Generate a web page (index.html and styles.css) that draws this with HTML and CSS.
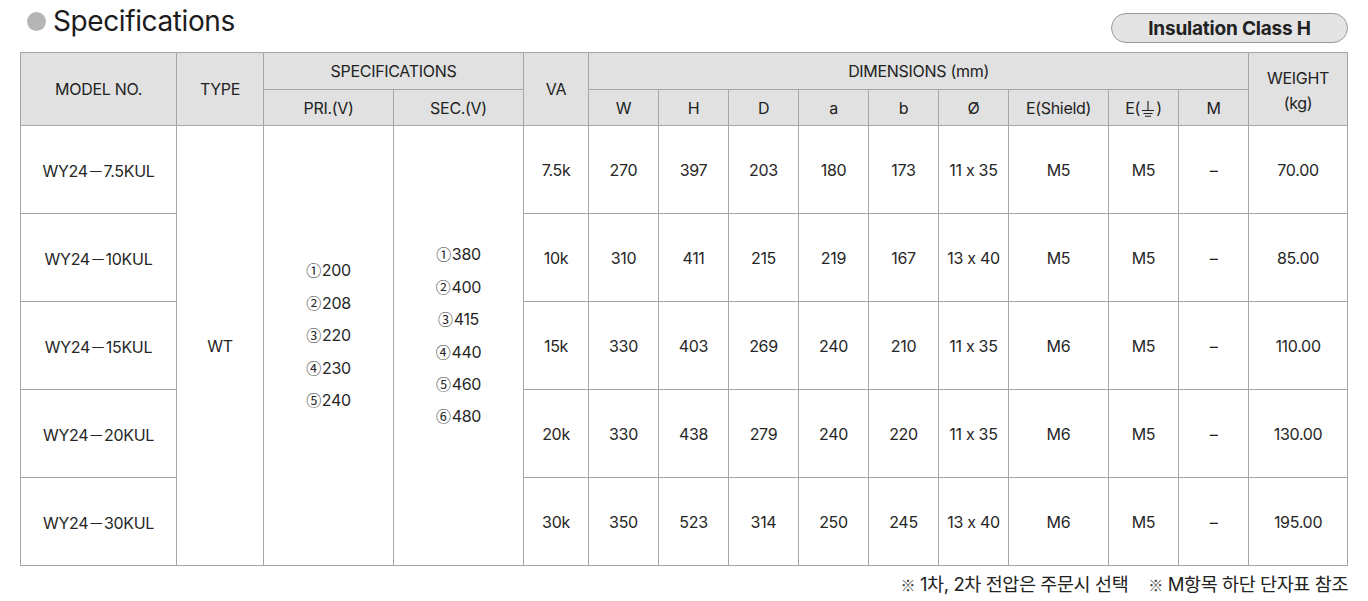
FILE: index.html
```html
<!DOCTYPE html>
<html lang="ko">
<head>
<meta charset="utf-8">
<link rel="stylesheet" href="styles.css">
</head>
<body>
<div class="page">
  <div class="head">
    <h1 class="title"><span class="dot"></span>Specifications</h1>
    <div class="badge">Insulation Class H</div>
  </div>
  <table class="spec">
    <colgroup>
      <col class="c156"><col class="c87"><col class="c130"><col class="c130"><col class="c65">
      <col class="c70"><col class="c70"><col class="c70"><col class="c70"><col class="c70"><col class="c70">
      <col class="c100"><col class="c70"><col class="c70"><col class="c99">
    </colgroup>
    <thead>
      <tr class="h1">
        <th rowspan="2">MODEL NO.</th>
        <th rowspan="2">TYPE</th>
        <th colspan="2">SPECIFICATIONS</th>
        <th rowspan="2">VA</th>
        <th colspan="9">DIMENSIONS (mm)</th>
        <th rowspan="2" class="wt">WEIGHT<br>(kg)</th>
      </tr>
      <tr class="h2">
        <th>PRI.(V)</th><th>SEC.(V)</th>
        <th>W</th><th>H</th><th>D</th><th>a</th><th>b</th><th>Ø</th><th>E(Shield)</th>
        <th>E(<svg class="gnd" width="14" height="17" viewBox="0 0 14 17"><path d="M7 1v9M1 10.5h12M2.5 13.5h9M4 16.2h6" stroke="#222" stroke-width="1.1" fill="none"/></svg>)</th>
        <th>M</th>
      </tr>
    </thead>
    <tbody>
      <tr>
        <td>WY24－7.5KUL</td>
        <td rowspan="5">WT</td>
        <td rowspan="5" class="list"><div class="lines"><span><i>①</i>200</span><span><i>②</i>208</span><span><i>③</i>220</span><span><i>④</i>230</span><span><i>⑤</i>240</span></div></td>
        <td rowspan="5" class="list"><div class="lines"><span><i>①</i>380</span><span><i>②</i>400</span><span><i>③</i>415</span><span><i>④</i>440</span><span><i>⑤</i>460</span><span><i>⑥</i>480</span></div></td>
        <td>7.5k</td><td>270</td><td>397</td><td>203</td><td>180</td><td>173</td><td>11 x 35</td><td>M5</td><td>M5</td><td>–</td><td>70.00</td>
      </tr>
      <tr>
        <td>WY24－10KUL</td>
        <td>10k</td><td>310</td><td>411</td><td>215</td><td>219</td><td>167</td><td>13 x 40</td><td>M5</td><td>M5</td><td>–</td><td>85.00</td>
      </tr>
      <tr>
        <td>WY24－15KUL</td>
        <td>15k</td><td>330</td><td>403</td><td>269</td><td>240</td><td>210</td><td>11 x 35</td><td>M6</td><td>M5</td><td>–</td><td>110.00</td>
      </tr>
      <tr>
        <td>WY24－20KUL</td>
        <td>20k</td><td>330</td><td>438</td><td>279</td><td>240</td><td>220</td><td>11 x 35</td><td>M6</td><td>M5</td><td>–</td><td>130.00</td>
      </tr>
      <tr>
        <td>WY24－30KUL</td>
        <td>30k</td><td>350</td><td>523</td><td>314</td><td>250</td><td>245</td><td>13 x 40</td><td>M6</td><td>M5</td><td>–</td><td>195.00</td>
      </tr>
    </tbody>
  </table>
  <p class="note"><span><b>※</b> 1차, 2차 전압은 주문시 선택</span><span><b>※</b> M항목 하단 단자표 참조</span></p>
</div>
</body>
</html>
```
FILE: styles.css
```css
* { box-sizing: border-box; }
html, body { margin: 0; background: #fff; }
body {
  font-family: Inter, "Noto Sans CJK KR", sans-serif;
  color: #222;
}
.page {
  width: 1368px;
  padding: 0 20px 0 20px;
}
.head {
  display: flex;
  justify-content: space-between;
  align-items: flex-end;
  height: 52px;
  padding-bottom: 8px;
}
.title {
  margin: 0;
  align-self: flex-start;
  display: flex;
  align-items: center;
  gap: 7px;
  font-size: 28px;
  font-weight: 400;
  letter-spacing: -0.4px;
  line-height: 42px;
  margin-left: 7px;
  color: #1c1c1c;
}
.dot {
  width: 19px;
  height: 19px;
  border-radius: 50%;
  background: #b5b5b5;
}
.badge {
  width: 237px;
  height: 30px;
  border: 1px solid #9a9a9a;
  border-radius: 15px;
  background: #e4e4e4;
  font-weight: 700;
  font-size: 19px;
  letter-spacing: -0.2px;
  display: flex;
  align-items: center;
  justify-content: center;
  color: #222;
  margin-bottom: 1px;
}
.spec {
  width: 1328px;
  border-collapse: collapse;
  table-layout: fixed;
  border: 1px solid #a6a6a6;
  font-size: 16px;
  letter-spacing: -0.3px;
}
.c156 { width: 156px; }
.c87 { width: 87px; }
.c130 { width: 130px; }
.c65 { width: 65px; }
.c70 { width: 70px; }
.c100 { width: 100px; }
.c99 { width: 99px; }
.spec th, .spec td {
  border: 1px solid #a6a6a6;
  text-align: center;
  vertical-align: middle;
  padding: 0;
  white-space: nowrap;
}
.spec th {
  background: #e1e1e1;
  font-weight: 400;
  color: #222;
}
.h1 th { height: 37px; }
.h2 th { height: 36px; }
.spec th.wt { line-height: 25px; padding-top: 3px; }
.gnd { vertical-align: -3px; margin: 0 1px; }
.spec td { height: 88px; color: #262626; }
.lines {
  display: flex;
  flex-direction: column;
  align-items: center;
  padding-bottom: 20px;
}
.lines span { line-height: 32.4px; }
.lines i {
  font-style: normal;
  font-family: "Noto Sans CJK KR", sans-serif;
  font-size: 15px;
  margin-right: 1px;
}
.note {
  margin: 4px 0 0 0;
  display: flex;
  justify-content: flex-end;
  gap: 20px;
  font-size: 18.5px;
  letter-spacing: -0.4px;
  color: #222;
}
.note b {
  font-weight: 400;
  font-family: "Noto Sans CJK KR", sans-serif;
  font-size: 15px;
  color: #444;
  margin-right: 0;
}
```
